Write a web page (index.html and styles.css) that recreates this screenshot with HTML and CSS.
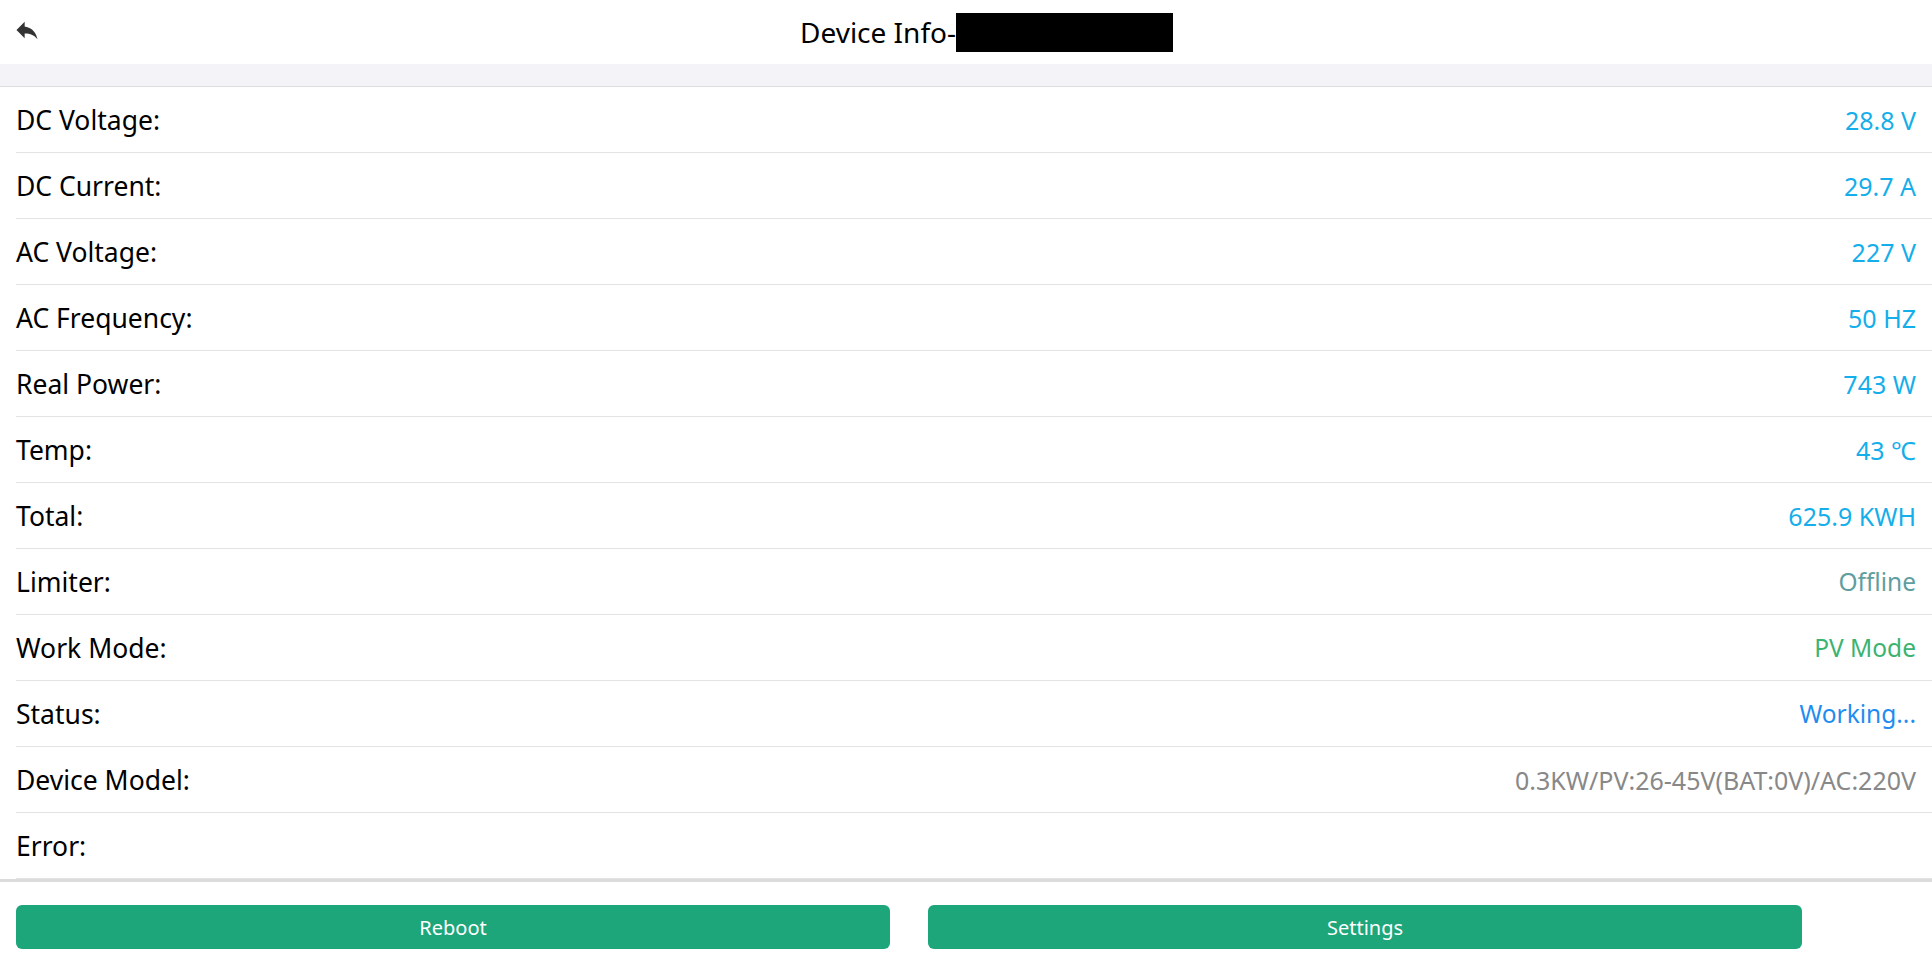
FILE: index.html
```html
<!DOCTYPE html>
<html lang="en">
<head>
    <meta charset="UTF-8">
    <meta name="viewport" content="width=device-width, initial-scale=1.0">
    <title>Device Info</title>
    <link rel="stylesheet" href="styles.css">
</head>
<body>
    <div class="header">
        <a class="back-btn" href="#">
            <svg viewBox="0 0 24 24" width="28" height="28"><path d="M10 9V5l-7 7 7 7v-4.1c5 0 8.5 1.6 11 5.1-1-5-4-10-11-11z" fill="#333"/></svg>
        </a>
        <div class="title">Device Info-<span class="masked"></span></div>
    </div>
    <div class="band"></div>

    <div class="info-list">
        <div class="info-row"><span class="label">DC Voltage:</span><span class="value">28.8 V</span></div>
        <div class="info-row"><span class="label">DC Current:</span><span class="value">29.7 A</span></div>
        <div class="info-row"><span class="label">AC Voltage:</span><span class="value">227 V</span></div>
        <div class="info-row"><span class="label">AC Frequency:</span><span class="value">50 HZ</span></div>
        <div class="info-row"><span class="label">Real Power:</span><span class="value">743 W</span></div>
        <div class="info-row"><span class="label">Temp:</span><span class="value">43 ℃</span></div>
        <div class="info-row"><span class="label">Total:</span><span class="value">625.9 KWH</span></div>
        <div class="info-row"><span class="label">Limiter:</span><span class="value offline">Offline</span></div>
        <div class="info-row"><span class="label">Work Mode:</span><span class="value mode">PV Mode</span></div>
        <div class="info-row"><span class="label">Status:</span><span class="value working">Working...</span></div>
        <div class="info-row"><span class="label">Device Model:</span><span class="value model">0.3KW/PV:26-45V(BAT:0V)/AC:220V</span></div>
        <div class="info-row"><span class="label">Error:</span><span class="value"></span></div>
    </div>

    <div class="actions">
        <button class="action-btn">Reboot</button>
        <button class="action-btn">Settings</button>
    </div>
</body>
</html>
```

FILE: styles.css
```css
:root {
    --text-main: #000;
    --line: #e3e3e3;
    --value-blue: #14aeea;
    --btn-green: #1ca67a;
}

body {
    margin: 0;
    font-family: 'Noto Sans', 'Open Sans', sans-serif;
    background: #fff;
    color: var(--text-main);
}

.header {
    height: 64px;
    display: flex;
    align-items: flex-start;
}

.back-btn {
    display: block;
    width: 28px;
    height: 28px;
    margin: 16px 0 0 13px;
}

.back-btn svg {
    display: block;
}

.title {
    flex: 1;
    margin-top: 13px;
    text-align: center;
    font-size: 28px;
    line-height: 39px;
}

.masked {
    display: inline-block;
    width: 217px;
    height: 39px;
    background: #000;
    vertical-align: top;
}

.band {
    height: 22px;
    background: #f4f4f8;
    border-bottom: 1px solid #dedede;
}

.info-list {
    border-bottom: 3px solid #dcdcdc;
}

.info-row {
    height: 65px;
    margin-left: 16px;
    padding-right: 16px;
    display: flex;
    align-items: center;
    justify-content: space-between;
    border-bottom: 1px solid var(--line);
}

.label {
    font-size: 26.5px;
}

.value {
    font-size: 25px;
    color: var(--value-blue);
}

.value.offline {
    color: #5f9ea0;
    font-size: 24.5px;
}

.value.mode {
    color: #3cb371;
    font-size: 24.5px;
}

.value.working {
    color: #1e8cf0;
    font-size: 24.5px;
}

.value.model {
    color: #888;
}

.actions {
    display: flex;
    gap: 2%;
    padding: 23px 16px;
}

.action-btn {
    width: 46%;
    height: 44px;
    border: none;
    border-radius: 6px;
    background: var(--btn-green);
    color: #fff;
    font-family: inherit;
    font-size: 20px;
    cursor: pointer;
}
```
